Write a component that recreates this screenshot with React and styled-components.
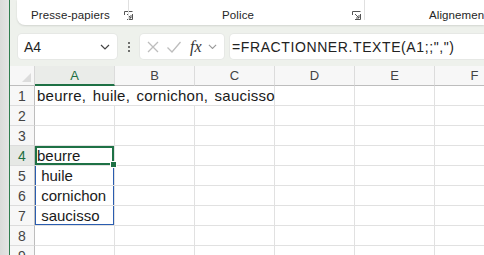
import React from 'react';
import styled, { createGlobalStyle } from 'styled-components';

const GlobalStyle = createGlobalStyle`
  html, body {
    margin: 0;
    padding: 0;
    overflow: hidden;
    background: #eef1ec;
  }
  * { box-sizing: border-box; }
`;

const Window = styled.div`
  display: flex;
  width: 484px;
  height: 255px;
  font-family: 'Liberation Sans', Arial, sans-serif;
  color: #1f1f1f;
`;

const SideStrip = styled.div`
  width: 10px;
  flex: none;
  background: linear-gradient(90deg, #d9dbd9 0%, #e4e5e4 100%);
  border-right: 1px solid #2f7d4f;
`;

const Main = styled.div`
  flex: 1;
  display: flex;
  flex-direction: column;
  min-width: 0;
  overflow: hidden;
`;

const RibbonArea = styled.div`
  height: 30px;
  padding-left: 7px;
  flex: none;
`;

const RibbonPanel = styled.div`
  height: 25px;
  background: #fff;
  border-radius: 0 0 0 8px;
  box-shadow: 0 1px 2px rgba(0, 0, 0, 0.12);
  display: flex;
  align-items: flex-start;
`;

const Group = styled.div`
  width: ${({ $w }) => $w}px;
  flex: none;
  display: flex;
  align-items: flex-end;
  justify-content: ${({ $align }) => $align || 'center'};
  padding: 0 ${({ $pr }) => $pr || 0}px 3px ${({ $pl }) => $pl || 0}px;
  height: 25px;
  font-size: 11.5px;
  line-height: 13px;
  color: #262626;
  gap: 14px;
  white-space: nowrap;
`;

const Separator = styled.div`
  width: 1px;
  height: 20px;
  flex: none;
  background: #e0e0e0;
`;

const GroupLabel = styled.span`
  letter-spacing: 0.1px;
  margin-right: ${({ $mr }) => $mr || 0}px;
`;

const Launcher = () => (
  <svg width="9" height="9" viewBox="0 0 9 9" style={{ marginBottom: 2, flex: 'none' }}>
    <path d="M0.5 4V0.5H8.5" fill="none" stroke="#555" strokeWidth="1" />
    <path d="M8.5 3V8.5H3" fill="none" stroke="#555" strokeWidth="1" />
    <path d="M3 3L7 7M7 4V7H4" fill="none" stroke="#555" strokeWidth="1" />
  </svg>
);

const FormulaRow = styled.div`
  height: 36px;
  flex: none;
  display: flex;
  align-items: flex-start;
  padding: 4px 0 0 8px;
`;

const NameBox = styled.div`
  width: 99px;
  height: 25px;
  background: #fff;
  border-radius: 4px;
  display: flex;
  align-items: center;
  justify-content: space-between;
  padding: 0 7px 0 6px;
  font-size: 14px;
  box-shadow: 0 0 0 1px #e6e8e5;
`;

const Dots = styled.div`
  width: 23px;
  height: 25px;
  display: flex;
  flex-direction: column;
  align-items: center;
  justify-content: center;
  gap: 2px;

  span {
    width: 2px;
    height: 2px;
    background: #444;
    border-radius: 1px;
  }
`;

const FxBox = styled.div`
  width: 84px;
  height: 25px;
  background: #fff;
  border-radius: 4px;
  display: flex;
  align-items: center;
  gap: 6px;
  padding-left: 6px;
  box-shadow: 0 0 0 1px #e6e8e5;
`;

const FxLabel = styled.span`
  font-family: 'Liberation Serif', 'Times New Roman', serif;
  font-style: italic;
  font-size: 16px;
  color: #333;
  margin-left: 2px;
`;

const FormulaInput = styled.div`
  margin-left: 6px;
  flex: 1;
  height: 25px;
  background: #fff;
  border-radius: 4px 0 0 4px;
  display: flex;
  align-items: center;
  padding-left: 2px;
  font-size: 14px;
  letter-spacing: 0.6px;
  white-space: nowrap;
  color: #222;
  box-shadow: 0 0 0 1px #e6e8e5;
`;

const Chevron = ({ color = '#444', size = 10 }) => (
  <svg width={size} height={size * 0.6} viewBox="0 0 10 6">
    <path d="M1 1L5 5L9 1" fill="none" stroke={color} strokeWidth="1.2" />
  </svg>
);

const Sheet = styled.div`
  flex: 1;
  background: #fff;
  display: grid;
  grid-template-columns: 25px repeat(6, 80px);
  grid-auto-rows: 20px;
  align-content: start;
`;

const Corner = styled.div`
  background: #f7f7f7;
  border-right: 1px solid #d6d6d6;
  border-bottom: 1px solid #bdbdbd;
  position: relative;

  &::after {
    content: '';
    position: absolute;
    right: 3px;
    bottom: 3px;
    border-style: solid;
    border-width: 0 0 9px 9px;
    border-color: transparent transparent #dcdcdc transparent;
  }
`;

const ColHeader = styled.div`
  background: ${({ $active }) => ($active ? '#eaece9' : '#f7f7f7')};
  color: ${({ $active }) => ($active ? '#1e6e42' : '#444')};
  border-right: 1px solid #dcdcdc;
  border-bottom: ${({ $active }) => ($active ? '2px solid #1e7145' : '1px solid #bdbdbd')};
  font-size: 13px;
  display: flex;
  align-items: center;
  justify-content: center;
`;

const RowHeader = styled.div`
  background: ${({ $active }) => ($active ? '#e6e8e5' : '#f7f7f7')};
  color: ${({ $active }) => ($active ? '#1e6e42' : '#444')};
  border-right: 1px solid #bdbdbd;
  border-bottom: 1px solid #dcdcdc;
  font-size: 14px;
  display: flex;
  align-items: center;
  justify-content: center;
`;

const Cell = styled.div`
  grid-column: span ${({ $span }) => $span || 1};
  border-right: 1px solid #e1e1e1;
  border-bottom: 1px solid #e1e1e1;
  font-size: 15px;
  word-spacing: ${({ $span }) => ($span ? '2px' : '0')};
  letter-spacing: ${({ $span }) => ($span ? '0.25px' : '0')};
  padding-left: 2px;
  display: flex;
  align-items: center;
  white-space: nowrap;
  overflow: visible;
  position: relative;
  color: #1a1a1a;

  ${({ $spill }) =>
    $spill &&
    `
    box-shadow: inset 1px 0 0 #2a5db0, inset -1px 0 0 #2a5db0${$spill === 'end' ? ', inset 0 -1px 0 #2a5db0' : ''};
  `}

  ${({ $selected }) =>
    $selected &&
    `
    box-shadow: inset 0 0 0 2px #1e7145;
    &::after {
      content: '';
      position: absolute;
      right: -3px;
      bottom: -3px;
      width: 5px;
      height: 5px;
      background: #1e7145;
      border: 1px solid #fff;
      z-index: 2;
    }
  `}
`;

const columns = ['A', 'B', 'C', 'D', 'E', 'F'];

const rows = [
  { n: 1, cells: [{ text: 'beurre, huile, cornichon, saucisso', span: 3 }, {}, {}, {}] },
  { n: 2 },
  { n: 3 },
  { n: 4, active: true, cells: [{ text: 'beurre', selected: true }, {}, {}, {}, {}, {}] },
  { n: 5, cells: [{ text: '\u00a0huile', spill: 'mid' }, {}, {}, {}, {}, {}] },
  { n: 6, cells: [{ text: '\u00a0cornichon', spill: 'mid' }, {}, {}, {}, {}, {}] },
  { n: 7, cells: [{ text: '\u00a0saucisso', spill: 'end' }, {}, {}, {}, {}, {}] },
  { n: 8 },
  { n: 9 },
];

const App = () => (
  <>
    <GlobalStyle />
    <Window>
      <SideStrip />
      <Main>
        <RibbonArea>
          <RibbonPanel>
            <Group $w={111} $align="flex-start" $pl={14}>
              <GroupLabel>Presse-papiers</GroupLabel>
              <Launcher />
            </Group>
            <Separator />
            <Group $w={235} $align="flex-end" $pr={3}>
              <GroupLabel $mr={84}>Police</GroupLabel>
              <Launcher />
            </Group>
            <Separator />
            <Group $w={150} $align="flex-start" $pl={64}>
              <GroupLabel>Alignement</GroupLabel>
            </Group>
          </RibbonPanel>
        </RibbonArea>

        <FormulaRow>
          <NameBox>
            <span>A4</span>
            <Chevron />
          </NameBox>
          <Dots>
            <span />
            <span />
            <span />
          </Dots>
          <FxBox>
            <svg width="14" height="14" viewBox="0 0 14 14">
              <path d="M2 2L12 12M12 2L2 12" stroke="#bdbdbd" strokeWidth="1.3" />
            </svg>
            <svg width="16" height="14" viewBox="0 0 16 14">
              <path d="M1.5 7.5L6 12L14.5 2" fill="none" stroke="#bdbdbd" strokeWidth="1.3" />
            </svg>
            <FxLabel>fx</FxLabel>
            <Chevron color="#999" size={9} />
          </FxBox>
          <FormulaInput>=FRACTIONNER.TEXTE(A1;;",")</FormulaInput>
        </FormulaRow>

        <Sheet>
          <Corner />
          {columns.map((c) => (
            <ColHeader key={c} $active={c === 'A'}>
              {c}
            </ColHeader>
          ))}
          {rows.map((r) => (
            <React.Fragment key={r.n}>
              <RowHeader $active={r.active}>{r.n}</RowHeader>
              {(r.cells || columns.map(() => ({}))).map((cell, i) => (
                <Cell key={i} $span={cell.span} $selected={cell.selected} $spill={cell.spill}>
                  {cell.text}
                </Cell>
              ))}
            </React.Fragment>
          ))}
        </Sheet>
      </Main>
    </Window>
  </>
);

export default App;
